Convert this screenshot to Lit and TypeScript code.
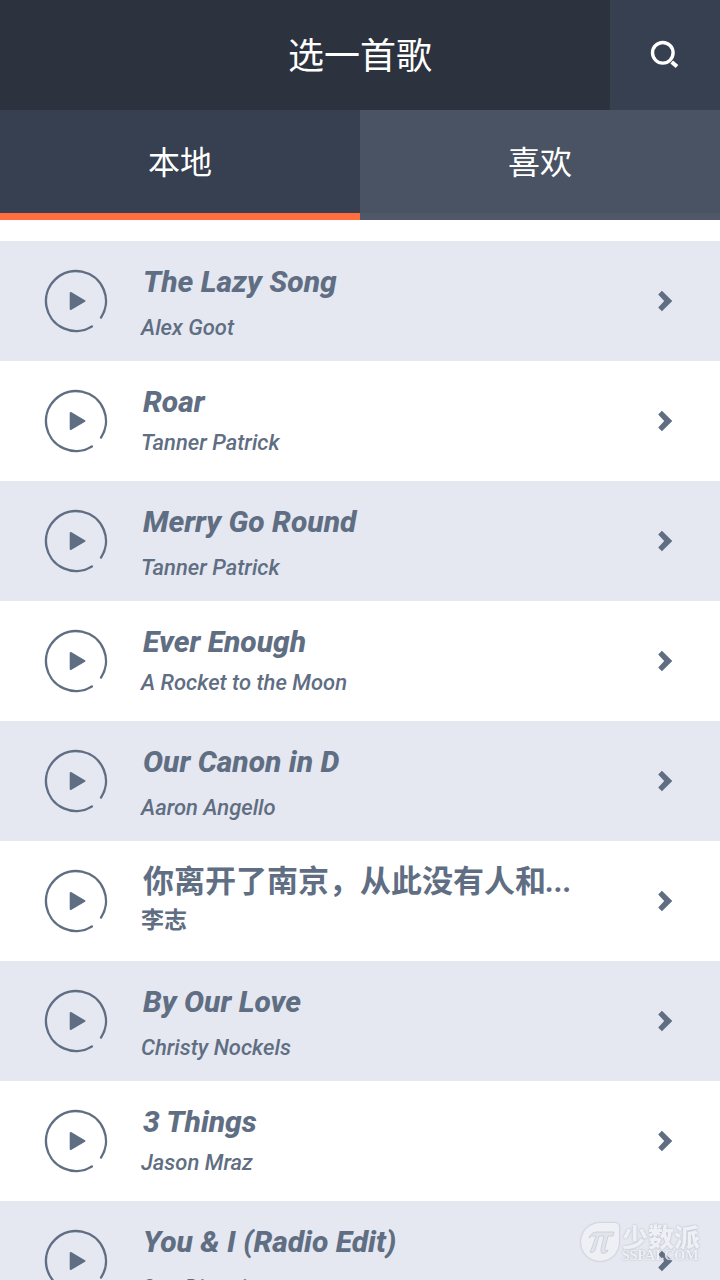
import { LitElement, html, css } from "lit";
import { customElement, property } from "lit/decorators.js";
import { classMap } from "lit/directives/class-map.js";

interface Song {
  title: string;
  artist: string;
  shortened?: boolean;
}

const SONGS: Song[] = [
  { title: "The Lazy Song", artist: "Alex Goot" },
  { title: "Roar", artist: "Tanner Patrick" },
  { title: "Merry Go Round", artist: "Tanner Patrick" },
  { title: "Ever Enough", artist: "A Rocket to the Moon" },
  { title: "Our Canon in D", artist: "Aaron Angello" },
  { title: "你离开了南京，从此没有人和", artist: "李志", shortened: true },
  { title: "By Our Love", artist: "Christy Nockels" },
  { title: "3 Things", artist: "Jason Mraz" },
  { title: "You & I (Radio Edit)", artist: "One Direction" },
];

const hasHan = (text: string) => /[\u4e00-\u9fff]/.test(text);

@customElement("song-row")
export class SongRow extends LitElement {
  @property({ attribute: false }) song!: Song;
  @property({ type: Boolean }) shaded = false;

  static styles = css`
    .row {
      display: grid;
      grid-template-columns: 64px minmax(0, 1fr) 16px;
      column-gap: 33px;
      align-items: start;
      box-sizing: border-box;
      height: 120px;
      padding: 0 47px 0 44px;
      color: #5f6e82;
    }
    .shaded {
      background: #e5e8f1;
    }
    .play {
      margin: 28px 0 0;
      padding: 0;
      border: 0;
      background: none;
      color: inherit;
      width: 64px;
      height: 64px;
      cursor: pointer;
    }
    svg {
      display: block;
    }
    .info {
      padding-top: 23px;
    }
    .title,
    .artist {
      margin: 0;
      font-family: Roboto, "Noto Sans CJK SC", sans-serif;
      font-style: italic;
      white-space: nowrap;
    }
    .title {
      padding-left: 2px;
      font-size: 30px;
      line-height: 36px;
      font-weight: 800;
    }
    .artist {
      margin-top: 9px;
      font-size: 22px;
      line-height: 28px;
      font-weight: 500;
    }
    .shaded .artist {
      margin-top: 14px;
    }
    .title.han {
      font-size: 31px;
    }
    .artist.han {
      margin-top: 7px;
      font-size: 23px;
      font-weight: 700;
    }
    .han {
      font-style: normal;
    }
    .title.han {
      font-weight: 700;
    }
    .more {
      font-family: "Roboto Condensed", Roboto, sans-serif;
      font-style: italic;
    }
    .open {
      margin-top: 49px;
      color: inherit;
    }
  `;

  render() {
    const { title, artist, shortened } = this.song;
    return html`
      <div class=${classMap({ row: true, shaded: this.shaded })}>
        <button class="play" aria-label="播放 ${title}">
          <svg width="64" height="64" viewBox="0 0 64 64" fill="none">
            <path d="M57.3 48.1A30 30 0 1 0 48.3 57.2" stroke="currentColor" stroke-width="2.4" stroke-linecap="round" transform="rotate(1 32 32)" />
            <path d="M26.6 23.9v16.2L40.6 32z" fill="currentColor" stroke="currentColor" stroke-width="1.8" stroke-linejoin="round" />
          </svg>
        </button>
        <div class="info">
          <h2 class=${classMap({ title: true, han: hasHan(title) })}>${title}${shortened ? html`<span class="more">...</span>` : null}</h2>
          <p class=${classMap({ artist: true, han: hasHan(artist) })}>${artist}</p>
        </div>
        <a class="open" href="#" aria-label="打开 ${title}">
          <svg width="16" height="22" viewBox="0 0 16 22">
            <path d="M1.2 4.4L4.9 0.8L15.3 11L4.9 21.2L1.2 17.6L7.2 11z" fill="currentColor" />
          </svg>
        </a>
      </div>
    `;
  }
}

@customElement("site-mark")
export class SiteMark extends LitElement {
  static styles = css`
    :host {
      display: flex;
      align-items: center;
      gap: 2px;
      color: #f1f3f7;
      opacity: 0.8;
      pointer-events: none;
    }
    svg {
      display: block;
      filter: drop-shadow(0 0 1px #a0a4b0);
    }
    .words {
      display: grid;
      text-shadow: 0 0 2px #989ca8;
    }
    .name {
      font: 900 26px/26px "Noto Sans CJK SC", sans-serif;
    }
    .site {
      font: 700 14px/13px "Liberation Serif", serif;
    }
  `;

  render() {
    return html`
      <svg width="40" height="40" viewBox="0 0 40 40">
        <path d="M20 1H35Q39 1 39 5V20A19 19 0 1 1 20 1z" fill="currentColor" />
        <path
          d="M9 16Q11 10 17 10H34L33 14H28L25 26Q24 30 28 28L27 30Q20 34 21 27L24 14H19L15 28Q13 32 10 30Q12 26 16 14Q11 13 9 16z"
          fill="#e1e4ec" stroke="#bfc3cd" stroke-width="0.8"
        />
      </svg>
      <div class="words">
        <span class="name">少数派</span>
        <span class="site">SSPAI.COM</span>
      </div>
    `;
  }
}

@customElement("app-root")
export class AppRoot extends LitElement {
  static styles = css`
    :host {
      display: block;
      height: 100vh;
      overflow: hidden;
      position: relative;
      background: #fff;
      font-family: Roboto, "Noto Sans CJK SC", sans-serif;
    }
    .bar {
      display: grid;
      grid-template-columns: 110px 1fr 110px;
      height: 110px;
      background: #2d333e;
    }
    h1 {
      grid-column: 2;
      margin: 0;
      padding-top: 3px;
      color: #fff;
      font-size: 36px;
      line-height: 108px;
      font-weight: 400;
      text-align: center;
    }
    .search {
      border: 0;
      padding: 0 0 2px;
      background: #364051;
      display: grid;
      place-items: center;
    }
    .tabs {
      display: grid;
      grid-template-columns: 1fr 1fr;
      height: 110px;
    }
    .tab {
      border: 0;
      border-bottom: 7px solid #4f5868;
      padding: 0 0 4px;
      background: #4a5363;
      color: #fff;
      font: inherit;
      font-size: 32px;
    }
    .tab[aria-selected="true"] {
      background: #364051;
      border-color: #ff6e3c;
    }
    .list {
      list-style: none;
      margin: 0;
      padding: 21px 0 0;
    }
    .mark {
      position: absolute;
      right: 20px;
      bottom: 18px;
    }
  `;

  render() {
    return html`
      <header class="bar">
        <h1>选一首歌</h1>
        <button class="search" aria-label="搜索">
          <svg width="30" height="30" viewBox="0 0 30 30" fill="none" stroke="#fff">
            <circle cx="12.8" cy="12.8" r="10.3" stroke-width="3.4" />
            <path d="M21.7 21.9L27 26.6" stroke-width="4" />
          </svg>
        </button>
      </header>
      <div class="tabs" role="tablist">
        <button class="tab" role="tab" aria-selected="true">本地</button>
        <button class="tab" role="tab" aria-selected="false">喜欢</button>
      </div>
      <ul class="list">
        ${SONGS.map((song, i) => html`<li><song-row .song=${song} ?shaded=${i % 2 === 0}></song-row></li>`)}
      </ul>
      <site-mark class="mark"></site-mark>
    `;
  }
}
